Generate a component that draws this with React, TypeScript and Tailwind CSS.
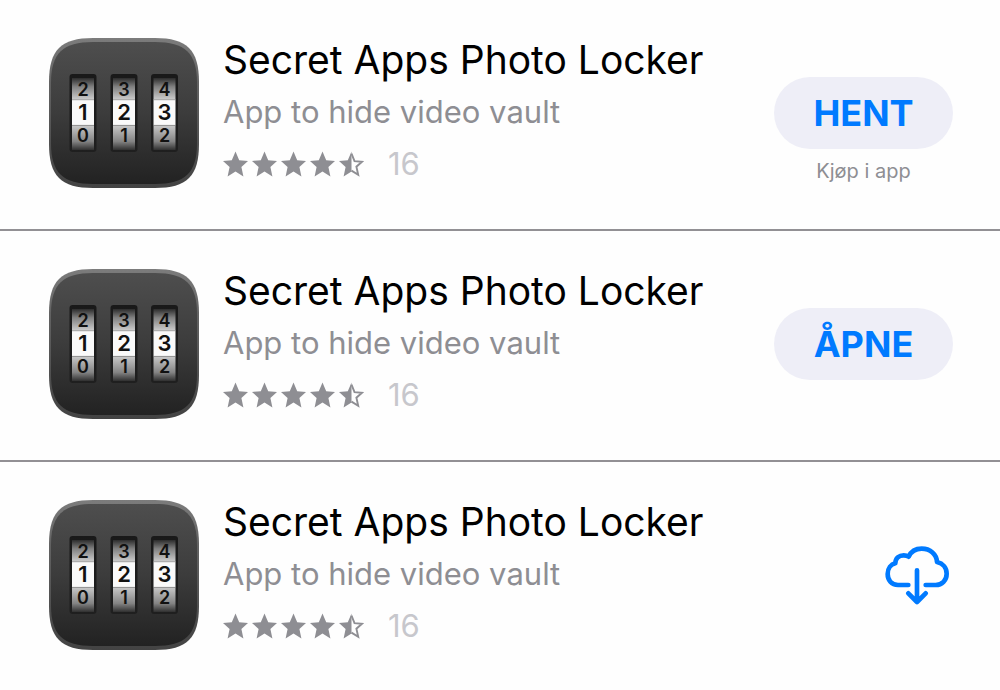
import React from 'react'

interface appRowInterface {
    name: string,
    subtitle: string,
    rating: number,
    reviews: number,
    action: 'HENT' | 'ÅPNE' | 'download',
    note?: string
}

const apps: appRowInterface[] = [
    { name: 'Secret Apps Photo Locker', subtitle: 'App to hide video vault', rating: 4.5, reviews: 16, action: 'HENT', note: 'Kjøp i app' },
    { name: 'Secret Apps Photo Locker', subtitle: 'App to hide video vault', rating: 4.5, reviews: 16, action: 'ÅPNE' },
    { name: 'Secret Apps Photo Locker', subtitle: 'App to hide video vault', rating: 4.5, reviews: 16, action: 'download' }
]

const drums = [
    { x: 20.5, digits: ['2', '1', '0'] },
    { x: 61.5, digits: ['3', '2', '1'] },
    { x: 102, digits: ['4', '3', '2'] }
]

const LockIcon: React.FC<{ id: string }> = ({ id }) => {
    return (
        <svg className="mt-1 h-[150px] w-[150px] shrink-0" viewBox="0 0 150 150" aria-hidden="true">
            <defs>
                <linearGradient id={`${id}-body`} x1="0" y1="0" x2="0" y2="1">
                    <stop offset="0" stopColor="#4e4e4e" />
                    <stop offset="0.5" stopColor="#3c3c3c" />
                    <stop offset="1" stopColor="#222222" />
                </linearGradient>
                <linearGradient id={`${id}-rim`} x1="0" y1="0" x2="0" y2="1">
                    <stop offset="0" stopColor="#7c7c7c" />
                    <stop offset="0.3" stopColor="#626262" />
                    <stop offset="1" stopColor="#434343" />
                </linearGradient>
                <linearGradient id={`${id}-slot`} x1="0" y1="0" x2="0" y2="1">
                    <stop offset="0" stopColor="#191919" />
                    <stop offset="1" stopColor="#1f1f1f" />
                </linearGradient>
                <linearGradient id={`${id}-drum`} x1="0" y1="0" x2="0" y2="1">
                    <stop offset="0" stopColor="#2c2c2c" />
                    <stop offset="0.12" stopColor="#808080" />
                    <stop offset="0.29" stopColor="#c8c8c8" />
                    <stop offset="0.3" stopColor="#fafafa" />
                    <stop offset="0.65" stopColor="#fafafa" />
                    <stop offset="0.66" stopColor="#c8c8c8" />
                    <stop offset="0.88" stopColor="#848484" />
                    <stop offset="1" stopColor="#303030" />
                </linearGradient>
            </defs>
            <path d="M44 0H106C138 0 150 12 150 44V106C150 138 138 150 106 150H44C12 150 0 138 0 106V44C0 12 12 0 44 0Z" fill={`url(#${id}-rim)`} />
            <path d="M44 4H106C136 4 148 15 148 45V105C148 135 136 146 106 146H44C14 146 2 135 2 105V45C2 15 14 4 44 4Z" fill={`url(#${id}-body)`} />
            {drums.map((drum) => (
                <g key={drum.x} fontFamily="Inter, sans-serif" textAnchor="middle" fill="#111111">
                    <rect x={drum.x} y="36" width="27" height="78" rx="3" fill={`url(#${id}-slot)`} />
                    <rect x={drum.x + 2.5} y="40" width="22" height="72" fill={`url(#${id}-drum)`} />
                    <path d={`M${drum.x + 2.5} 61.7h22M${drum.x + 2.5} 87.4h22`} stroke="#777777" strokeWidth="0.7" />
                    <text x={drum.x + 13.5} y="58" fontSize="18" fontWeight="600">{drum.digits[0]}</text>
                    <text x={drum.x + 13.5} y="82" fontSize="22" fontWeight="600">{drum.digits[1]}</text>
                    <text x={drum.x + 13.5} y="104" fontSize="18" fontWeight="600">{drum.digits[2]}</text>
                </g>
            ))}
        </svg>
    )
}

const starPath = 'M12.5 0.4L16.2 9.2L25 9.9L18.4 16L20.4 25.6L12.5 20.6L4.6 25.6L6.6 16L0 9.9L8.8 9.2Z'

const Star: React.FC<{ half: boolean }> = ({ half }) => {
    return (
        <svg className="h-[26px] w-[25px]" viewBox="0 0 25 26" fill="#8e8e93" aria-hidden="true">
            {half ? (
                <>
                    <path d="M12.5 0.4V20.6L4.6 25.6L6.6 16L0 9.9L8.8 9.2Z" />
                    <path d="M12.5 2.6L15.5 10.1L23 10.7L17.4 15.7L19.2 23.8L12.5 19.6" fill="none" stroke="#8e8e93" strokeWidth="1.9" />
                </>
            ) : (
                <path d={starPath} />
            )}
        </svg>
    )
}

const CloudIcon: React.FC = () => {
    return (
        <svg className="h-[60px] w-16" viewBox="45 46 192 180" fill="none" stroke="#007aff" strokeWidth="14" strokeLinecap="round" strokeLinejoin="round" aria-hidden="true">
            <path d="M115 166H84C64 166 53 151 53 133C53 116 63 104 76 101C76 85 88 77 101 77C107 77 112 78 116 81C123 66 138 57 155 57C181 57 200 74 201 97C219 101 230 115 230 132C230 152 216 166 197 166H167" />
            <path d="M141 122V216M115 191L141 217L167 191" />
        </svg>
    )
}

const AppRow: React.FC<appRowInterface & { id: string }> = ({ id, name, subtitle, rating, reviews, action, note }) => {
    return (
        <li className="flex min-h-[231px] items-start border-b-2 border-[#929094] pt-[34px] pr-[47px] pl-[49px] last:border-none">
            <LockIcon id={id} />
            <div className="ml-6 min-w-0 flex-1">
                <h2 className="text-[39px] leading-[52px] text-black">{name}</h2>
                <p className="text-[31px] leading-[52px] text-[#8e8e93]">{subtitle}</p>
                <div className="flex h-[52px] items-center gap-6">
                    <div className="flex gap-1" role="img" aria-label={`${rating}`}>
                        {[1, 2, 3, 4, 5].map((n) => (
                            <Star key={n} half={n > rating} />
                        ))}
                    </div>
                    <span className="text-[31px] leading-[52px] text-[#c7c7cc]">{reviews}</span>
                </div>
            </div>
            <div className="mt-[43px] flex w-[179px] shrink-0 flex-col">
                {action === 'download' ? (
                    <button type="button" className="mr-1 flex h-[72px] items-center self-end" aria-label={name}>
                        <CloudIcon />
                    </button>
                ) : (
                    <button type="button" className="h-[72px] rounded-full bg-[#eeeef7] text-[36px] font-bold text-[#007aff]">{action}</button>
                )}
                {note && <p className="mt-2 text-center text-[20px] leading-7 text-[#8e8e93]">{note}</p>}
            </div>
        </li>
    )
}

const App: React.FC = () => {
    return (
        <main className="min-h-screen bg-[#fefefe] font-['Inter',sans-serif]">
            <ul>
                {apps.map((app, index) => (
                    <AppRow key={index} id={`lock-${index}`} {...app} />
                ))}
            </ul>
        </main>
    )
}

export default App
